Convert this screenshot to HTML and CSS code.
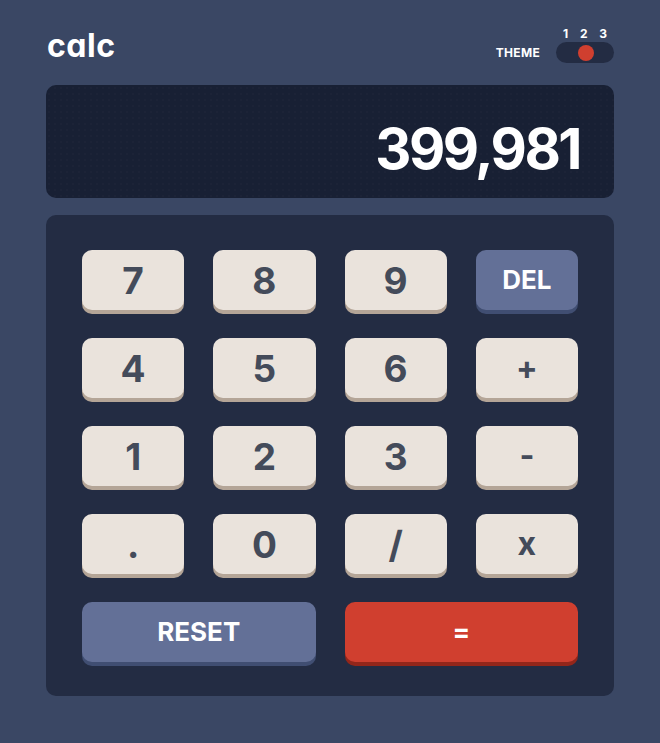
FILE: index.html
```html
<!DOCTYPE html>
<html lang="en">
<head>
<meta charset="utf-8">
<title>calc</title>
<link rel="stylesheet" href="styles.css">
</head>
<body>
<main class="calc">
  <header class="header">
    <h1 class="logo">calc</h1>
    <div class="theme">
      <span class="theme-label">THEME</span>
      <div class="theme-switch">
        <div class="theme-nums"><span>1</span><span>2</span><span>3</span></div>
        <div class="toggle"><span class="knob"></span></div>
      </div>
    </div>
  </header>
  <section class="screen"><span class="value">399,981</span></section>
  <section class="keypad">
    <button class="key">7</button>
    <button class="key">8</button>
    <button class="key">9</button>
    <button class="key key-alt">DEL</button>
    <button class="key">4</button>
    <button class="key">5</button>
    <button class="key">6</button>
    <button class="key key-op">+</button>
    <button class="key">1</button>
    <button class="key">2</button>
    <button class="key">3</button>
    <button class="key key-op">-</button>
    <button class="key">.</button>
    <button class="key">0</button>
    <button class="key">/</button>
    <button class="key key-op">x</button>
    <button class="key key-alt key-wide">RESET</button>
    <button class="key key-eq key-wide">=</button>
  </section>
</main>
</body>
</html>
```
FILE: styles.css
```css
* { box-sizing: border-box; }
html, body { margin: 0; padding: 0; }
body {
  background: #3a4764;
  font-family: Inter, "Liberation Sans", sans-serif;
  font-feature-settings: "cv11";
  color: #fff;
  min-height: 743px;
}
.calc {
  width: 568px;
  margin: 0 auto;
  padding-top: 28px;
}
.header {
  display: flex;
  justify-content: space-between;
  align-items: flex-end;
  height: 35px;
}
.logo {
  margin: 0 0 1px 1px;
  font-size: 32px;
  font-weight: 700;
  line-height: 1;
  letter-spacing: 0.5px;
}
.theme {
  display: flex;
  align-items: flex-end;
  gap: 16px;
}
.theme-label {
  font-size: 12px;
  font-weight: 700;
  letter-spacing: 0.3px;
  line-height: 1;
  margin-bottom: 4px;
}
.theme-switch {
  display: flex;
  flex-direction: column;
  width: 58px;
}
.theme-nums {
  display: flex;
  justify-content: space-between;
  padding: 0 7px 0 7px;
  font-size: 12px;
  font-weight: 700;
  line-height: 1;
  margin-bottom: 2px;
}
.toggle {
  height: 21px;
  border-radius: 11px;
  background: #232c43;
  display: flex;
  align-items: center;
  justify-content: center;
  padding: 0 4px;
}
.knob {
  width: 16px;
  height: 16px;
  border-radius: 50%;
  background: #d03f2f;
  margin-left: 1px;
}
.screen {
  margin-top: 22px;
  height: 113px;
  border-radius: 10px;
  background-color: #182034;
  background-image: radial-gradient(rgba(255,255,255,0.035) 0.6px, transparent 0.8px);
  background-size: 6px 6px;
  display: flex;
  align-items: center;
  justify-content: flex-end;
  padding: 14px 34px 0 0;
}
.value {
  font-size: 56px;
  font-weight: 700;
  line-height: 1;
  letter-spacing: -2.5px;
}
.keypad {
  margin-top: 17px;
  background: #232c43;
  border-radius: 10px;
  padding: 35px 36px 34px;
  display: grid;
  grid-template-columns: repeat(4, 1fr);
  column-gap: 29px;
  row-gap: 28px;
}
.key {
  height: 60px;
  border: 0;
  border-radius: 10px;
  background: #eae3dc;
  box-shadow: 0 4px 0 #b4a597;
  color: #444b5a;
  font-family: inherit;
  font-feature-settings: "cv11";
  font-size: 37px;
  font-weight: 700;
  line-height: 1;
  padding: 0;
  display: flex;
  align-items: center;
  justify-content: center;
}
.key-op { font-size: 32px; }
.key-alt {
  background: #637097;
  box-shadow: 0 4px 0 #404e72;
  color: #fff;
  font-size: 26px;
}
.key-eq {
  background: #d03f2f;
  box-shadow: 0 4px 0 #93261a;
  color: #fff;
  font-size: 26px;
}
.key-wide { grid-column: span 2; }
```
